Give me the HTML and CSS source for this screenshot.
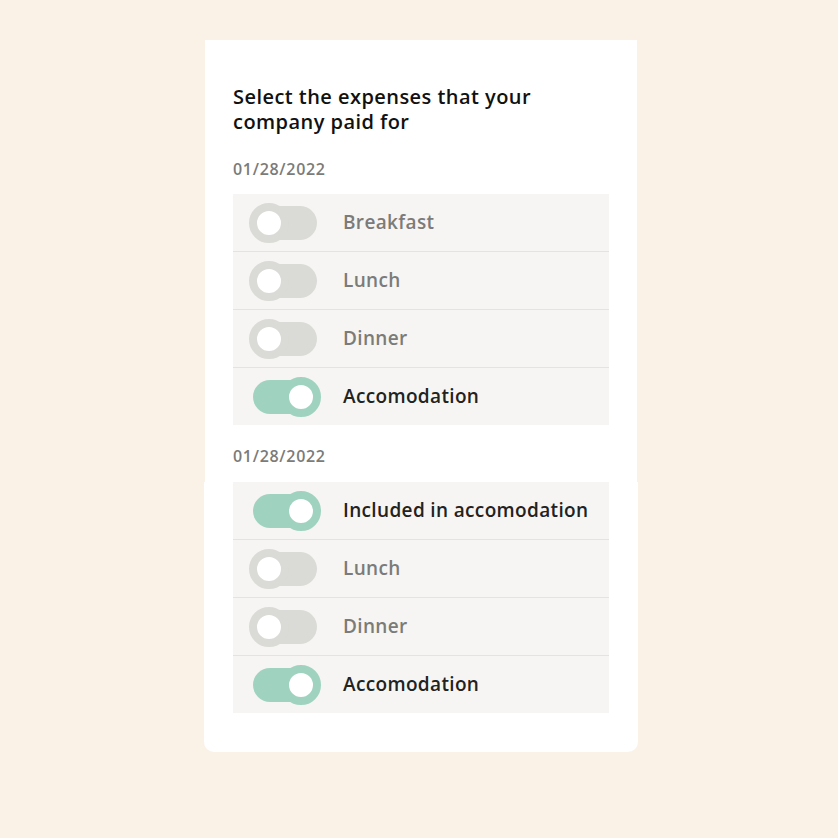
FILE: index.html
```html
<!DOCTYPE html>
<html lang="en">
<head>
    <meta charset="UTF-8">
    <meta name="viewport" content="width=device-width, initial-scale=1.0">
    <title>Expenses</title>
    <link rel="stylesheet" href="styles.css">
</head>
<body>
    <div class="card">
        <div class="card-top">
            <h1>Select the expenses that your company paid for</h1>

            <div class="date">01/28/2022</div>
            <ul class="expense-list">
                <li class="expense"><span class="toggle"></span><span class="label">Breakfast</span></li>
                <li class="expense"><span class="toggle"></span><span class="label">Lunch</span></li>
                <li class="expense"><span class="toggle"></span><span class="label">Dinner</span></li>
                <li class="expense on"><span class="toggle"></span><span class="label">Accomodation</span></li>
            </ul>

            <div class="date date-second">01/28/2022</div>
        </div>

        <div class="card-bottom">
            <ul class="expense-list">
                <li class="expense on"><span class="toggle"></span><span class="label">Included in accomodation</span></li>
                <li class="expense"><span class="toggle"></span><span class="label">Lunch</span></li>
                <li class="expense"><span class="toggle"></span><span class="label">Dinner</span></li>
                <li class="expense on"><span class="toggle"></span><span class="label">Accomodation</span></li>
            </ul>
        </div>
    </div>
</body>
</html>
```

FILE: styles.css
```css
body {
    margin: 0;
    background-color: #faf2e7;
    font-family: "Open Sans", Lato, sans-serif;
    height: 838px;
}
.card {
    width: 432px;
    margin-left: 205px;
    padding-top: 40px;
}
.card-top {
    background-color: #fff;
    padding: 44px 28px 15px 28px;
}
.card-bottom {
    background-color: #fff;
    margin: 0 -1px;
    padding: 0 29px 39px 29px;
    border-radius: 0 0 10px 10px;
}
h1 {
    margin: 0;
    font-size: 20px;
    line-height: 25px;
    font-weight: 600;
    color: #111;
    letter-spacing: 0.45px;
    width: 330px;
}
.date {
    margin-top: 25px;
    margin-bottom: 15px;
    font-size: 16px;
    line-height: 20px;
    font-weight: 600;
    color: #7b7b79;
    letter-spacing: 0.7px;
}
.date-second {
    margin-top: 21px;
    margin-bottom: 0;
    padding-bottom: 1px;
}
.expense-list {
    list-style: none;
    margin: 0;
    padding: 0;
}
.expense {
    display: flex;
    align-items: center;
    height: 57px;
    background-color: #f6f5f3;
    border-bottom: 1px solid #e4e3e0;
}
.expense:last-child {
    border-bottom: none;
}
.toggle {
    position: relative;
    width: 64px;
    height: 34px;
    margin-left: 20px;
    border-radius: 17px;
    background-color: #dadad6;
}
.toggle::after {
    content: "";
    position: absolute;
    top: -3px;
    left: -4px;
    width: 24px;
    height: 24px;
    border: 8px solid #dadad6;
    border-radius: 50%;
    background-color: #fff;
}
.expense.on .toggle {
    background-color: #9fd3c0;
}
.expense.on .toggle::after {
    left: 28px;
    border-color: #9fd3c0;
}
.label {
    margin-left: 26px;
    margin-bottom: 2px;
    font-size: 19px;
    font-weight: 600;
    color: #7b7b79;
    letter-spacing: 0.35px;
}
.expense.on .label {
    color: #222;
}
```
